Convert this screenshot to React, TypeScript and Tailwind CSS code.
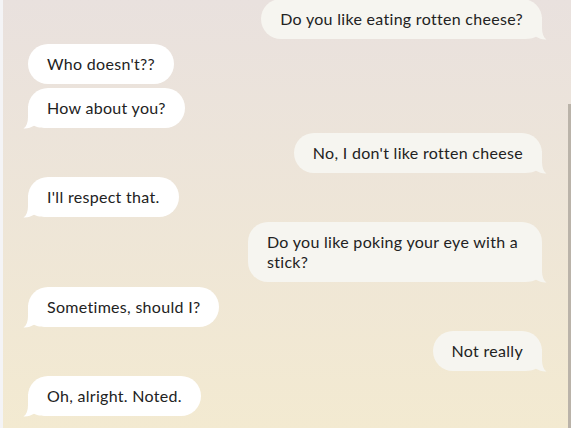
import React from 'react';

type Msg = { from: 'me' | 'them'; text: string; tail: boolean };

const messages: Msg[] = [
  { from: 'me', text: 'Do you like eating rotten cheese?', tail: true },
  { from: 'them', text: "Who doesn't??", tail: false },
  { from: 'them', text: 'How about you?', tail: true },
  { from: 'me', text: "No, I don't like rotten cheese", tail: true },
  { from: 'them', text: "I'll respect that.", tail: true },
  { from: 'me', text: 'Do you like poking your eye with a stick?', tail: true },
  { from: 'them', text: 'Sometimes, should I?', tail: true },
  { from: 'me', text: 'Not really', tail: true },
  { from: 'them', text: 'Oh, alright. Noted.', tail: true },
];

// little curl at the bottom corner of a bubble
const Tail = ({ mine }: { mine: boolean }) => (
  <svg
    width="20"
    height="40"
    viewBox="0 0 20 40"
    className={`absolute bottom-0 overflow-visible ${mine ? 'right-0 -scale-x-100' : 'left-0'}`}
  >
    <path
      d="M0 18 L0 29 C0 34.5 -1.5 38.5 -4.5 40.5 C-0.5 40.8 3 39.6 6 37.8 C9 39.4 13 40 20 40 L20 18 Z"
      className={mine ? 'fill-[#f6f5f0]' : 'fill-white'}
    />
  </svg>
);

const Bubble = ({ msg }: { msg: Msg }) => {
  const mine = msg.from === 'me';
  return (
    <div className={`flex ${mine ? 'justify-end' : 'justify-start'}`}>
      <div
        className={`relative max-w-[294px] rounded-[20px] px-[19px] py-2.5 text-[16px] leading-5 tracking-[0.3px] text-[#222] ${
          mine ? 'bg-[#f6f5f0]' : 'bg-white'
        }`}
      >
        {msg.tail && <Tail mine={mine} />}
        <span className="relative">{msg.text}</span>
      </div>
    </div>
  );
};

export default function App() {
  return (
    <div
      className="flex h-[428px] w-[571px] overflow-hidden"
      style={{ fontFamily: 'Lato, "Noto Sans", sans-serif' }}
    >
      <div className="w-[3px] shrink-0 bg-[#f4f4f6]" />
      <div className="relative flex-1 overflow-hidden bg-linear-to-b from-[#e9e1de] to-[#f3ead1] pl-[25px] pr-[29px]">
        <div className="-mt-px flex flex-col gap-[4.6px]">
          {messages.map((m, i) => (
            <Bubble key={i} msg={m} />
          ))}
        </div>
        <div className="absolute right-0 top-[104px] bottom-0 w-[3px] bg-[#bab3a9]" />
      </div>
    </div>
  );
}
